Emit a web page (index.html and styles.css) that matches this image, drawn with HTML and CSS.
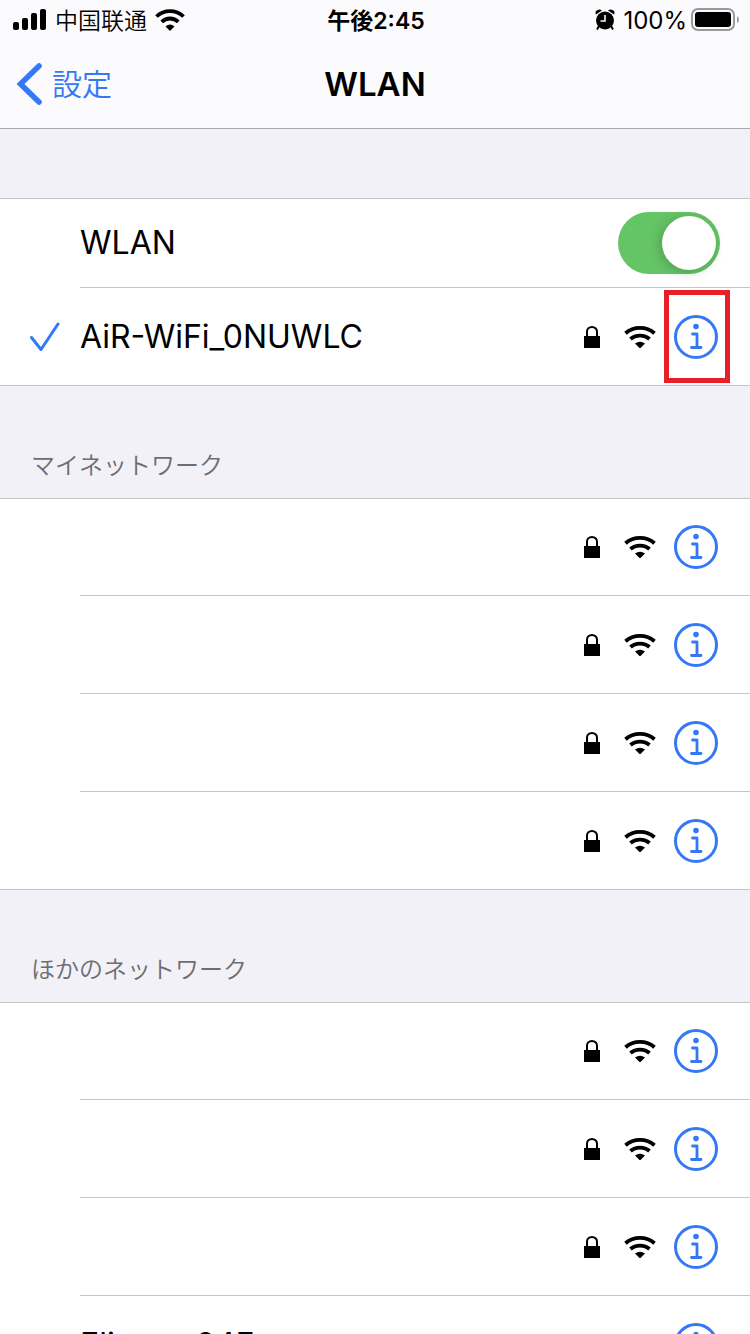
FILE: index.html
```
<!DOCTYPE html>
<html lang="ja">
<head>
<meta charset="utf-8">
<meta name="viewport" content="width=device-width">
<title>WLAN</title>
<link rel="stylesheet" href="styles.css">
</head>
<body>
<svg class="defs" aria-hidden="true">
  <symbol id="lock" viewBox="0 0 16 22">
    <path d="M3 11V5.600a5 4.600 0 0 1 10 0V11" fill="none" stroke="currentColor" stroke-width="2"/>
    <path d="M0 10h16v12H0z" fill="currentColor"/>
  </symbol>
  <symbol id="wifi" viewBox="0 0 32 22">
    <path d="M1.500 7.200C9.500 .2 22.500 .2 30.500 7.200M6.500 13C11.500 8.400 20.500 8.400 25.500 13" fill="none" stroke="currentColor" stroke-width="3.800"/>
    <path d="M11 17.500Q16 14 21 17.500L16 22.500z" fill="currentColor"/>
  </symbol>
  <symbol id="info" viewBox="0 0 44 44">
    <circle cx="22" cy="22" r="20.500" fill="none" stroke="currentColor" stroke-width="3"/>
    <circle cx="22" cy="11.500" r="2.800" fill="currentColor"/>
    <path d="M18.500 19h4.500V32.500M17.500 32.500h9.500" fill="none" stroke="currentColor" stroke-width="2.800" stroke-linecap="round" stroke-linejoin="round"/>
  </symbol>
</svg>
<div class="screen">
  <header class="header">
    <div class="status">
      <div class="status-left">
        <svg class="signal" viewBox="0 0 34 24" aria-hidden="true"><rect x="0" y="13" width="6" height="8" rx="2"/><rect x="9" y="9" width="6" height="12" rx="2"/><rect x="18" y="4" width="6" height="17" rx="2"/><rect x="27" y="0" width="6" height="21" rx="2"/></svg>
        <span class="carrier" lang="zh">中国联通</span>
        <svg class="status-wifi" viewBox="0 0 30 24" aria-hidden="true"><path d="M1.500 7.500C9 .3 21 .3 28.500 7.500M6.700 12.800C11.500 8.400 18.500 8.400 23.300 12.800" fill="none" stroke="currentColor" stroke-width="3.800"/><path d="M10.500 17.500Q15 13.700 19.500 17.500L15 22z"/></svg>
      </div>
      <span class="time">午後2:45</span>
      <div class="status-right">
        <svg class="alarm" viewBox="0 0 20 24" aria-hidden="true"><path d="M4 17l-2 3.500M16 17l2 3.500" stroke="currentColor" stroke-width="2"/><circle cx="10" cy="11.500" r="9"/><path d="M1 5.500Q-.5 2 2.500 1Q5 0 7 1.500zM19 5.500Q20.500 2 17.500 1Q15 0 13 1.500z"/><path d="M10 6v6H5.500" fill="none" stroke="#fbfbfd" stroke-width="1.600"/></svg>
        <span class="percent">100%</span>
        <svg class="battery" viewBox="0 0 48 26" aria-hidden="true"><rect x="1" y="1" width="42" height="21" rx="6" fill="none" stroke="#9a9a9c" stroke-width="2"/><rect x="4" y="4" width="36" height="15" rx="3"/><path d="M46 8q2 1 2 3.500T46 15z" fill="#9a9a9c"/></svg>
      </div>
    </div>
    <nav class="nav">
      <a class="back" href="#"><svg class="chevron" viewBox="0 0 26 42" aria-hidden="true"><path d="M23 3L4.500 21L23 39" fill="none" stroke="currentColor" stroke-width="5.500" stroke-linecap="round" stroke-linejoin="miter"/></svg><span>設定</span></a>
      <h1 class="title">WLAN</h1>
    </nav>
  </header>
  <main>
    <section class="group first">
      <div class="row switch-row">
        <div class="row-body">
          <label class="name" for="wlan">WLAN</label>
          <input class="toggle" id="wlan" type="checkbox" role="switch" checked>
        </div>
      </div>
      <div class="row">
        <svg class="check" viewBox="0 0 30 30" aria-hidden="true"><path d="M1.500 15.500L11 27.500L28 2" fill="none" stroke="currentColor" stroke-width="3" stroke-linecap="round" stroke-linejoin="round"/></svg>
        <div class="row-body"><span class="name">AiR-WiFi_0NUWLC</span><svg class="lock"><use href="#lock"/></svg><svg class="wifi"><use href="#wifi"/></svg><button class="info marked" aria-label="詳細"><svg><use href="#info"/></svg></button></div>
      </div>
    </section>
    <h2 class="heading">マイネットワーク</h2>
    <section class="group">
      <div class="row"><div class="row-body"><span class="name"></span><svg class="lock"><use href="#lock"/></svg><svg class="wifi"><use href="#wifi"/></svg><button class="info" aria-label="詳細"><svg><use href="#info"/></svg></button></div></div>
      <div class="row"><div class="row-body"><span class="name"></span><svg class="lock"><use href="#lock"/></svg><svg class="wifi"><use href="#wifi"/></svg><button class="info" aria-label="詳細"><svg><use href="#info"/></svg></button></div></div>
      <div class="row"><div class="row-body"><span class="name"></span><svg class="lock"><use href="#lock"/></svg><svg class="wifi"><use href="#wifi"/></svg><button class="info" aria-label="詳細"><svg><use href="#info"/></svg></button></div></div>
      <div class="row"><div class="row-body"><span class="name"></span><svg class="lock"><use href="#lock"/></svg><svg class="wifi"><use href="#wifi"/></svg><button class="info" aria-label="詳細"><svg><use href="#info"/></svg></button></div></div>
    </section>
    <h2 class="heading">ほかのネットワーク</h2>
    <section class="group">
      <div class="row"><div class="row-body"><span class="name"></span><svg class="lock"><use href="#lock"/></svg><svg class="wifi"><use href="#wifi"/></svg><button class="info" aria-label="詳細"><svg><use href="#info"/></svg></button></div></div>
      <div class="row"><div class="row-body"><span class="name"></span><svg class="lock"><use href="#lock"/></svg><svg class="wifi"><use href="#wifi"/></svg><button class="info" aria-label="詳細"><svg><use href="#info"/></svg></button></div></div>
      <div class="row"><div class="row-body"><span class="name"></span><svg class="lock"><use href="#lock"/></svg><svg class="wifi"><use href="#wifi"/></svg><button class="info" aria-label="詳細"><svg><use href="#info"/></svg></button></div></div>
      <div class="row"><div class="row-body"><span class="name">Elimen-64F</span><svg class="lock"><use href="#lock"/></svg><svg class="wifi"><use href="#wifi"/></svg><button class="info" aria-label="詳細"><svg><use href="#info"/></svg></button></div></div>
    </section>
  </main>
</div>
</body>
</html>
```
FILE: styles.css
```
* { box-sizing: border-box; }
body {
  margin: 0;
  background: #f2f1f7;
  color: #000;
  font-family: Inter, "Noto Sans CJK JP", sans-serif;
}
.defs { position: absolute; width: 0; height: 0; }
svg { display: block; flex: none; fill: currentColor; }
.screen { height: 100vh; overflow: hidden; }

.header { background: #fbfbfd; border-bottom: 1px solid #a9a9b0; }
.status {
  display: grid;
  grid-template-columns: 1fr auto 1fr;
  align-items: center;
  height: 40px;
  padding: 2px 11px 0 13px;
  font-size: 24px;
  line-height: 38px;
}
.status-left, .status-right { display: flex; align-items: center; }
.status-left { gap: 8px; }
.status-right { justify-content: flex-end; gap: 4px; }
.signal { width: 34px; height: 24px; }
.carrier { font-family: Inter, "Noto Sans CJK SC", sans-serif; font-size: 23px; font-weight: 350; }
.status-wifi { width: 30px; height: 24px; }
.time { font-weight: 600; font-size: 23px; }
.alarm { width: 20px; height: 24px; margin-right: 4px; }
.battery { width: 48px; height: 26px; }

.nav {
  display: grid;
  grid-template-columns: 1fr auto 1fr;
  align-items: center;
  height: 88px;
  padding: 0 16px;
}
.back {
  display: flex;
  align-items: center;
  gap: 10px;
  color: #3478f6;
  font-size: 30px;
  font-weight: 350;
  line-height: 40px;
  text-decoration: none;
}
.chevron { width: 26px; height: 42px; }
.title { margin: 0; font-size: 33px; font-weight: 600; line-height: 40px; }

.group { background: #fff; border: solid #c6c6c8; border-width: 1px 0; }
.first { margin-top: 69px; }
.row { display: grid; grid-template-columns: 80px 1fr; align-items: center; }
.row-body {
  grid-column: 2;
  display: flex;
  align-items: center;
  height: 98px;
  padding-right: 20px;
  border-bottom: 1px solid #c6c6c8;
}
.row:last-child .row-body { border-bottom: 0; height: 97px; }
.row:first-child:not(.switch-row) .row-body { height: 97px; }
.switch-row .row-body { height: 89px; padding-right: 30px; }
.check { grid-row: 1; width: 30px; height: 30px; margin-left: 30px; color: #3478f6; }
.name { flex: 1; font-size: 32px; line-height: 40px; }
.lock { width: 16px; height: 22px; margin-right: 24px; }
.wifi { width: 32px; height: 22px; margin-right: 8px; }
.info {
  flex: none;
  width: 66px;
  height: 93px;
  padding: 0 2px 0 0;
  border: 5px solid transparent;
  background: none;
  color: #3478f6;
}
.info svg { width: 44px; height: 44px; margin: 0 auto; }
.marked { border-color: #e71f28; }

.toggle {
  appearance: none;
  display: flex;
  width: 102px;
  height: 62px;
  margin: 0;
  padding: 4px;
  border-radius: 31px;
  background: #65c466;
}
.toggle::before {
  content: "";
  width: 54px;
  height: 54px;
  margin-left: auto;
  border-radius: 50%;
  background: #fff;
  box-shadow: -2px 2px 12px rgb(0 0 0 / 20%);
}

.heading {
  margin: 0;
  padding: 60px 31px 12px;
  color: #6d6d72;
  font-size: 24px;
  font-weight: 350;
  line-height: 40px;
}
```
